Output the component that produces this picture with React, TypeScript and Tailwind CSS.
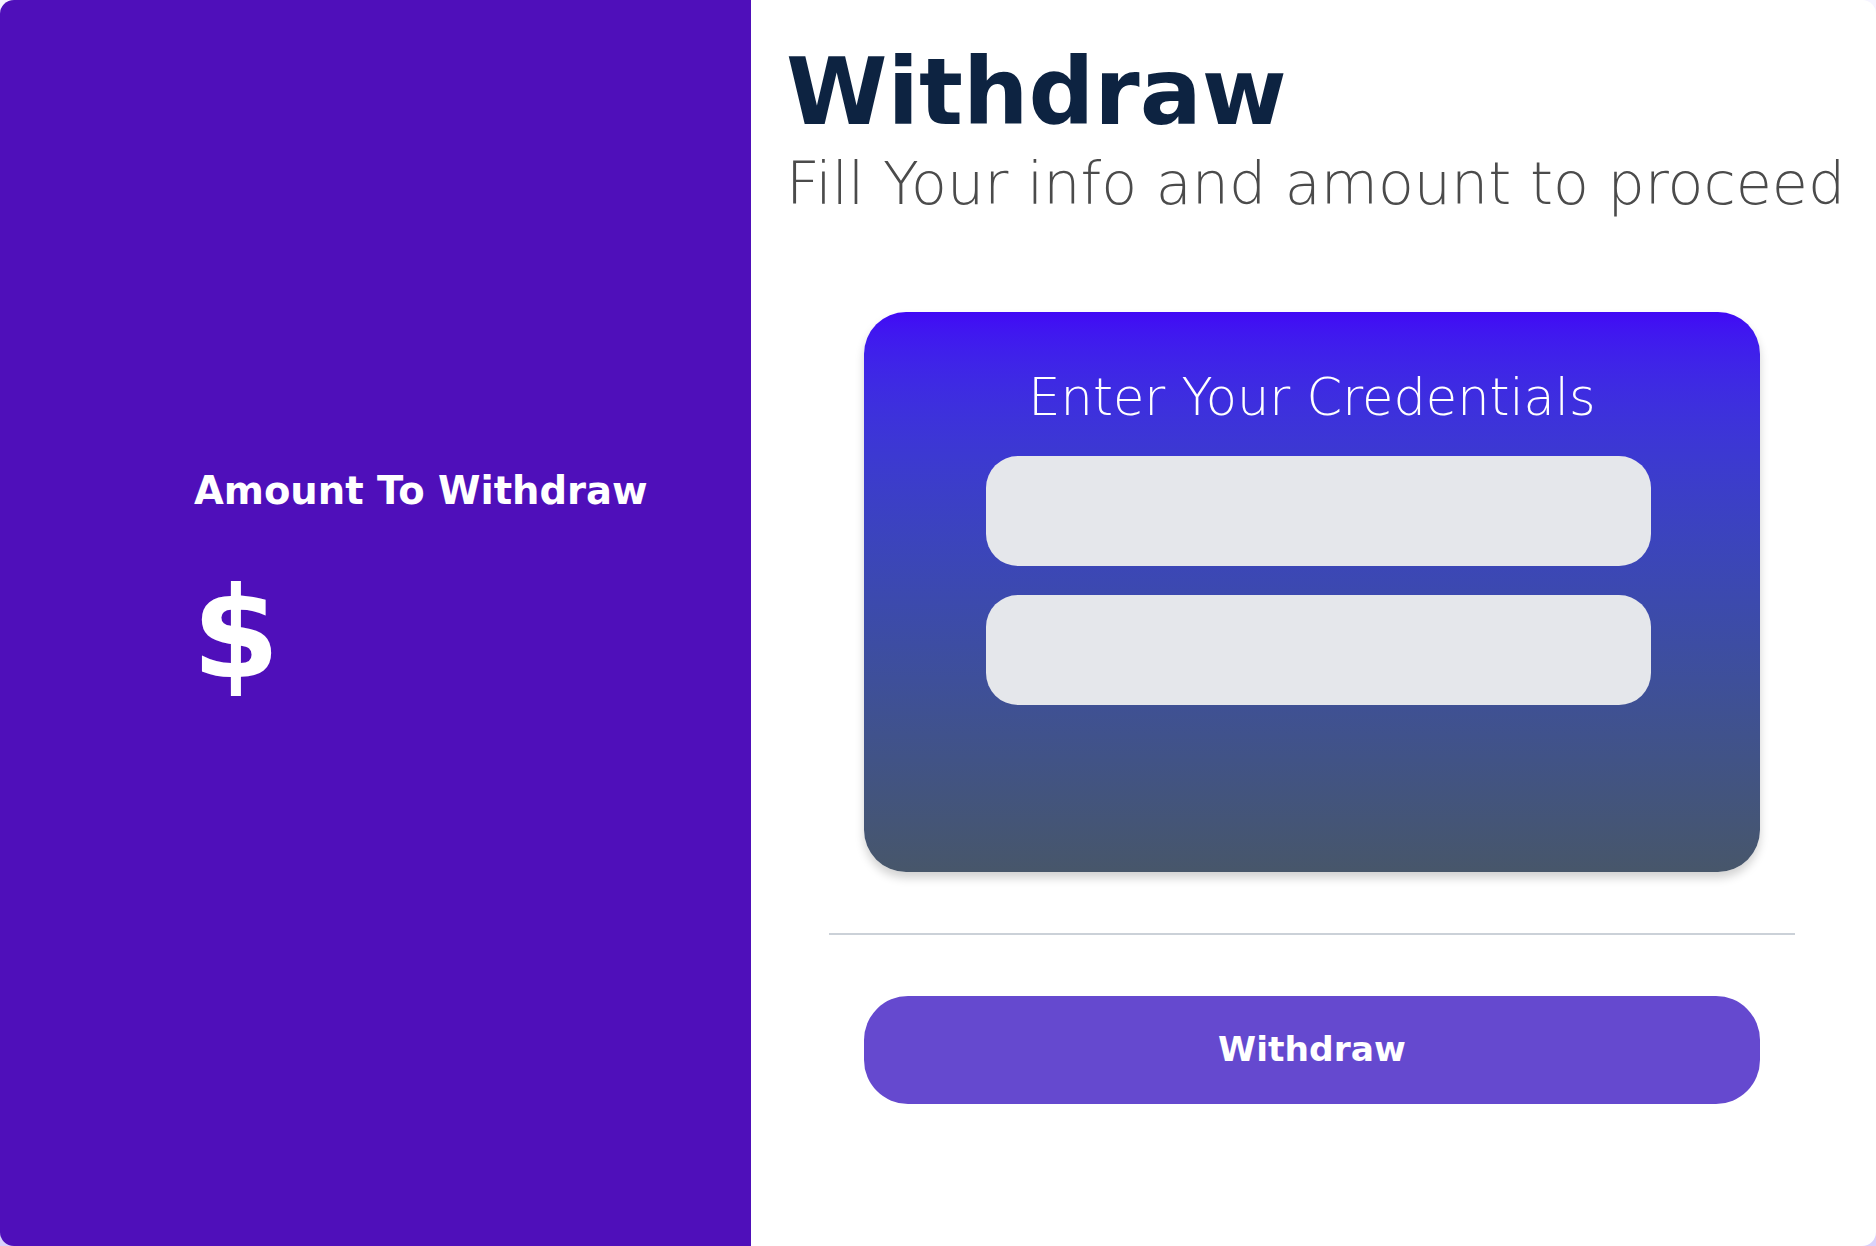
export default function App() {
    return (
        <div className="min-h-screen bg-gradient-to-b from-[#f6f4ff] to-[#d9d2fb] font-['DejaVu_Sans',sans-serif]">
            <div className="flex h-[1246px] w-full overflow-hidden rounded-[14px]">
                {/* Left: amount */}
                <aside className="flex w-[751px] shrink-0 flex-col bg-[#4f0fba] pl-[194px] pt-[472px] text-white">
                    <h2 className="text-[38.5px] font-bold leading-none">Amount To Withdraw</h2>
                    <div className="mt-[60px] -ml-[2px] flex items-center">
                        <span className="text-[126px] font-bold leading-none">$</span>
                        <input
                            type="text"
                            className="ml-4 h-[110px] w-[300px] bg-transparent text-[64px] font-bold text-white outline-none"
                        />
                    </div>
                </aside>

                {/* Right: form */}
                <main className="flex flex-1 flex-col bg-white">
                    <header className="pl-[35px] pt-[47px]">
                        <h1 className="text-[92px] font-bold leading-none text-[#0d2341]">Withdraw</h1>
                        <p className="mt-4 text-[58.7px] font-extralight leading-none text-[#4b4b4b]">
                            Fill Your info and amount to proceed
                        </p>
                    </header>

                    <div className="mt-[98px] flex flex-col items-center pr-[3px]">
                        <section className="flex h-[560px] w-[896px] flex-col rounded-[42px] bg-gradient-to-b from-[#4108f5] to-[#47566a] pt-[60px] shadow-[0_6px_10px_rgba(0,0,0,0.18)]">
                            <h3 className="text-center text-[51px] font-extralight leading-none text-white">
                                Enter Your Credentials
                            </h3>
                            <input
                                type="text"
                                className="ml-[122px] mt-[33px] h-[110px] w-[665px] rounded-[32px] bg-[#e5e7eb] px-8 text-3xl outline-none"
                            />
                            <input
                                type="password"
                                className="ml-[122px] mt-[29px] h-[110px] w-[665px] rounded-[32px] bg-[#e5e7eb] px-8 text-3xl outline-none"
                            />
                        </section>

                        <hr className="mt-[61px] w-[966px] border-t-2 border-[#cbd1d8]" />

                        <button className="mt-[61px] h-[108px] w-[896px] rounded-[44px] bg-[#6549cf] text-[34.5px] font-bold text-white">
                            Withdraw
                        </button>
                    </div>
                </main>
            </div>
        </div>
    );
}
